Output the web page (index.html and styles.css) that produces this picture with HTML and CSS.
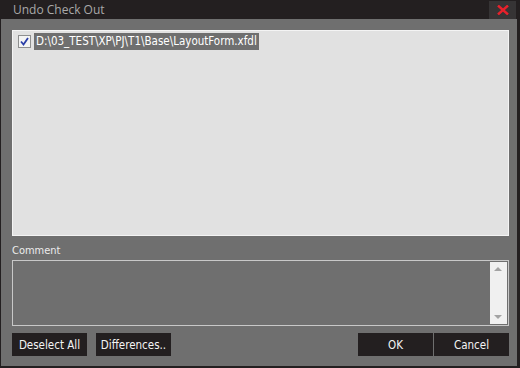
FILE: index.html
```html
<!DOCTYPE html>
<html lang="en">
<head>
    <meta charset="UTF-8">
    <title>Undo Check Out</title>
    <link rel="stylesheet" href="styles.css">
</head>
<body>

    <div class="titlebar">
        <div class="title">Undo Check Out</div>
        <button class="close-btn">
            <svg width="12" height="10" viewBox="0 0 12 10">
                <path d="M1 0.5 L11 9.5 M11 0.5 L1 9.5" stroke="#e8212b" stroke-width="2.4" fill="none"/>
            </svg>
        </button>
    </div>

    <div class="content">
        <div class="file-list">
            <div class="file-row">
                <span class="check">
                    <svg width="9" height="9" viewBox="0 0 9 9">
                        <path d="M1 4.5 L3.5 7.5 L8 1" stroke="#2b3fa8" stroke-width="1.8" fill="none"/>
                    </svg>
                </span>
                <span class="file-name">D:\03_TEST\XP\PJ\T1\Base\LayoutForm.xfdl</span>
            </div>
        </div>

        <div class="comment-label">Comment</div>
        <div class="comment-box">
            <div class="scrollbar">
                <span class="arrow up"></span>
                <span class="arrow down"></span>
            </div>
        </div>

        <div class="buttons">
            <button class="btn">Deselect All</button>
            <button class="btn">Differences..</button>
            <div class="spacer"></div>
            <button class="btn">OK</button>
            <button class="btn btn-cancel">Cancel</button>
        </div>
    </div>

</body>
</html>
```

FILE: styles.css
```css
body {
    margin: 0;
    background: #231f20;
    font-family: "DejaVu Sans Condensed", sans-serif;
    width: 520px;
    height: 368px;
    display: flex;
    flex-direction: column;
    overflow: hidden;
}
.titlebar {
    height: 24px;
    display: flex;
    align-items: center;
    justify-content: space-between;
    padding: 0 4px 0 13px;
}
.title {
    color: #a9a9a9;
    font-family: "Open Sans", sans-serif;
    font-size: 12px;
    margin-top: -1px;
}
.close-btn {
    width: 27px;
    height: 18px;
    background: #363435;
    border: none;
    padding: 0;
    display: flex;
    align-items: center;
    justify-content: center;
}
.content {
    flex: 1;
    background: #6f6f6f;
    margin: 0 3px 2px 1px;
    padding: 11px 8px 10px 11px;
    display: flex;
    flex-direction: column;
}
.file-list {
    height: 200px;
    background: #e1e1e1;
    border: 1px solid #f4f4f4;
    padding: 2px 5px;
}
.file-row {
    display: flex;
    align-items: center;
    height: 17px;
}
.check {
    width: 11px;
    height: 11px;
    border: 1px solid #8e8f8f;
    background: #f4f4f4;
    display: flex;
    align-items: center;
    justify-content: center;
    margin-right: 3px;
}
.file-name {
    background: #6f6f6f;
    color: #ffffff;
    font-size: 11.5px;
    line-height: 17px;
    padding: 0 2px;
}
.comment-label {
    color: #ececec;
    font-size: 11px;
    margin: 8px 0 3px 0;
    height: 13px;
    line-height: 13px;
}
.comment-box {
    height: 62px;
    border: 1px solid #c8c8c8;
    display: flex;
    justify-content: flex-end;
    padding: 1px;
}
.scrollbar {
    width: 17px;
    background: #f0f0f0;
    position: relative;
}
.arrow {
    position: absolute;
    left: 4px;
    width: 0;
    height: 0;
    border-left: 4px solid transparent;
    border-right: 4px solid transparent;
}
.arrow.up {
    top: 5px;
    border-bottom: 4px solid #a3a3a3;
}
.arrow.down {
    bottom: 5px;
    border-top: 4px solid #a3a3a3;
}
.buttons {
    display: flex;
    margin-top: 7px;
    gap: 9px;
}
.spacer {
    flex: 1;
}
.btn {
    width: 75px;
    height: 23px;
    background: #231f20;
    color: #f4f4f4;
    border: none;
    font-family: "DejaVu Sans Condensed", sans-serif;
    font-size: 11.5px;
    padding: 0;
}
.btn-cancel {
    margin-left: -8px;
}
```
